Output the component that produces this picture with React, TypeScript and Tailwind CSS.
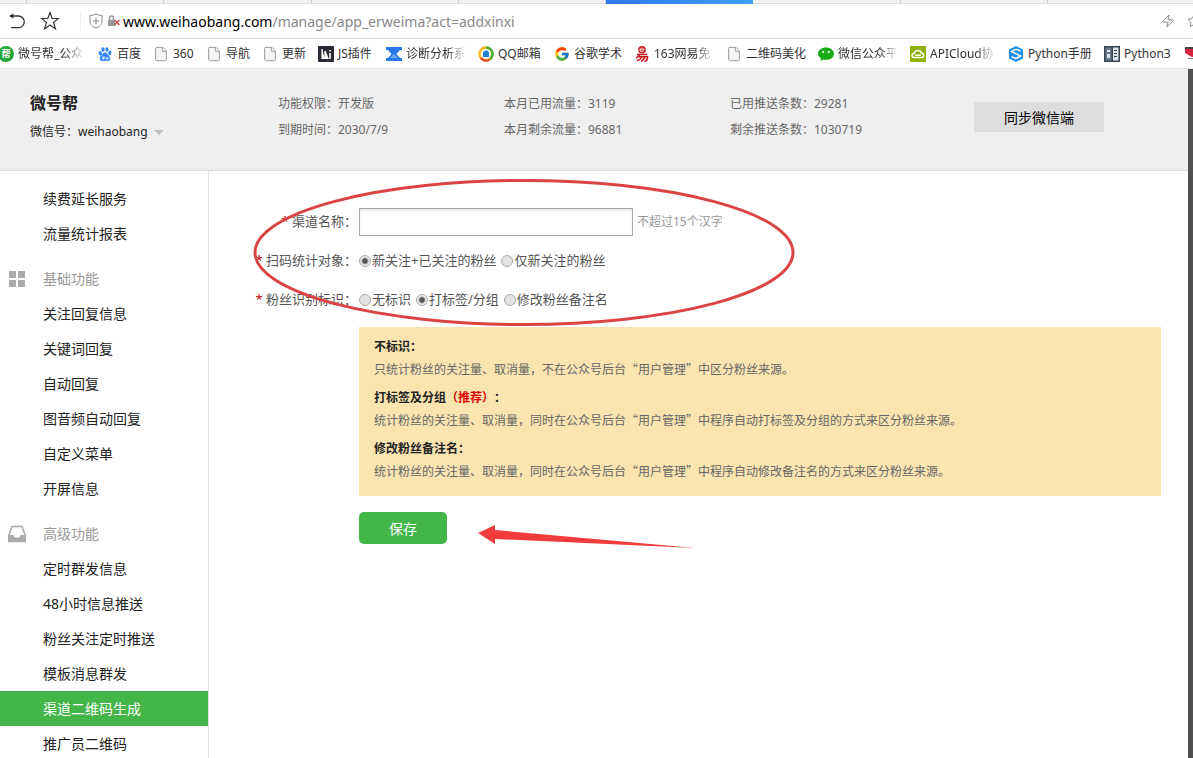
import type { ReactNode } from "react";
import { File, Star, Zap } from "lucide-react";
import { FcGoogle } from "react-icons/fc";

const PageIcon = () => <File className="size-4 fill-[#f6f6f6] text-[#999999]" strokeWidth={1.5} />;

const BangIcon = () => (
    <span className="flex size-4 items-center justify-center rounded-full bg-[#22a83a] text-[9px] leading-none font-bold text-white">帮</span>
);

const BaiduIcon = () => (
    <svg viewBox="0 0 16 16" className="size-4" fill="#3385ff">
        <ellipse cx="3.300" cy="7.300" rx="1.700" ry="2.200" transform="rotate(-15 3.300 7.300)" />
        <ellipse cx="6" cy="3.500" rx="1.600" ry="2.300" />
        <ellipse cx="10" cy="3.500" rx="1.600" ry="2.300" />
        <ellipse cx="12.800" cy="7" rx="1.600" ry="2.200" transform="rotate(15 12.800 7)" />
        <path d="M8 6.500c2 0 2.500 2.200 3.800 3.200 2.200 1.700 2 5-.8 5.300-1.200.1-2-.3-3-.3s-1.800.4-3 .3c-2.800-.3-3-3.600-.8-5.300C5.500 8.700 6 6.500 8 6.500z" />
        <path d="M7 10v3H5.500v-1.500H7M9 11v2h2v-2" fill="none" stroke="#fff" strokeWidth="0.800" />
    </svg>
);

const JsIcon = () => (
    <svg viewBox="0 0 16 16" className="size-4">
        <rect width="16" height="16" rx="1" fill="#2b2b35" />
        <path d="M4 3v9.500h3M7 5l3 7.500H7z" fill="#fff" stroke="#fff" strokeWidth="1.200" />
        <path d="M12 7v6M12 4v1.500" fill="none" stroke="#fff" strokeWidth="1.600" />
    </svg>
);

const DiagnoseIcon = () => (
    <svg viewBox="0 0 16 16" className="size-4">
        <path d="M0 1h16v3h-2l-3.500 4 3.500 4h2v3H0v-3h2l3.500-4L2 4H0z" fill="#2878e8" />
        <path d="M4 12l4-4 4 4z" fill="#6cabff" />
    </svg>
);

const MailIcon = () => (
    <svg viewBox="0 0 16 16" className="size-4">
        <circle cx="8" cy="8" r="6.500" fill="#fff" stroke="#f5b81c" strokeWidth="2.400" />
        <path d="M8 1.500A6.500 6.500 0 0 1 14.500 8c0 2-1 4-2.500 5" fill="none" stroke="#4cae3c" strokeWidth="2.600" />
        <path d="M3 12.200A6.500 6.500 0 0 0 11.500 13.500" fill="none" stroke="#e64b2c" strokeWidth="2.600" />
        <path d="M8 4.500a3 3 0 0 1 3 3V11H5V7.500a3 3 0 0 1 3-3z" fill="#1f7fd0" />
    </svg>
);

const NetEaseIcon = () => (
    <svg viewBox="0 0 16 16" className="size-4" fill="none" stroke="#c9151e" strokeWidth="1.600">
        <circle cx="8" cy="3.800" r="3.800" fill="#c9151e" stroke="none" />
        <path d="M6 4h4c0-2.500-4-2.500-4 0s2.500 2.200 3.500 1.300" stroke="#fff" strokeWidth="0.900" />
        <path d="M3 8.500h10M6 8.500c-1 2-2 2.500-4 3.500M4.500 10.800h9c0 3-.5 4.500-3 4.500M8 11c-1 2-2.500 3-5 3.800M11 11c-1 2.500-2 3.500-4 4.500" />
    </svg>
);

const WechatIcon = () => (
    <svg viewBox="0 0 16 16" className="size-4">
        <path d="M8 1.500c4.400 0 8 2.700 8 6.200s-3.600 6.200-8 6.200c-.9 0-1.700-.1-2.500-.3L2.500 15l.6-2.700C1.200 11.200 0 9.500 0 7.700 0 4.200 3.600 1.500 8 1.500z" fill="#1aad19" />
        <circle cx="5.200" cy="6" r="1.100" fill="#fff" />
        <circle cx="10.800" cy="6" r="1.100" fill="#fff" />
    </svg>
);

const ApiIcon = () => (
    <svg viewBox="0 0 16 16" className="size-4">
        <rect width="16" height="16" fill="#8fb400" />
        <path d="M4 11.500a2 2 0 0 1 0-4c.5-2 2-3 4-3s3 1 3.400 2.500c3 0 3 4.500.6 4.500zM5 9.200h6" fill="none" stroke="#fff" strokeWidth="1.500" />
    </svg>
);

const PythonIcon = () => (
    <svg viewBox="0 0 16 16" className="size-4">
        <path d="M8 0l7 3.500v9L8 16l-7-3.500v-9z" fill="#1e90e8" />
        <path d="M12.500 5L8 3.200 3.500 5.500l9 4.500L8 12.600 3.500 10.800" fill="none" stroke="#fff" strokeWidth="1.500" />
    </svg>
);

const BookIcon = () => (
    <svg viewBox="0 0 16 16" className="size-4">
        <rect width="16" height="16" fill="#364452" />
        <path d="M1.500 1.500h6v13h-6z" fill="#6b7c8b" />
        <path d="M9 1.500h5.500v13H9z" fill="#dce3e8" />
        <path d="M3 4h3v2H3zM3 8h3v4H3z" fill="#dce3e8" />
        <path d="M10 4h3v1h-3zM10 7h3v1h-3zM10 10h3v1h-3z" fill="#364452" />
    </svg>
);

const RedIcon = () => (
    <svg viewBox="0 0 16 16" className="size-4">
        <path d="M1 1h15v2H1z" fill="#444" />
        <path d="M1 3h15v8H8L1 7z" fill="#d5233b" />
        <path d="M4 12h12v1H4z" fill="#777" />
    </svg>
);

const bookmarks: { label: string; width: string; icon: ReactNode; fade?: boolean }[] = [
    { label: "微号帮_公众", width: "w-[67px]", icon: <BangIcon />, fade: true },
    { label: "百度", width: "w-6", icon: <BaiduIcon /> },
    { label: "360", width: "w-[21px]", icon: <PageIcon /> },
    { label: "导航", width: "w-6", icon: <PageIcon /> },
    { label: "更新", width: "w-6", icon: <PageIcon /> },
    { label: "JS插件", width: "w-9", icon: <JsIcon /> },
    { label: "诊断分析系", width: "w-[60px]", icon: <DiagnoseIcon />, fade: true },
    { label: "QQ邮箱", width: "w-11", icon: <MailIcon /> },
    { label: "谷歌学术", width: "w-12", icon: <FcGoogle className="size-4" /> },
    { label: "163网易免", width: "w-[60px]", icon: <NetEaseIcon />, fade: true },
    { label: "二维码美化", width: "w-[60px]", icon: <PageIcon /> },
    { label: "微信公众平", width: "w-[60px]", icon: <WechatIcon />, fade: true },
    { label: "APICloud协", width: "w-[66px]", icon: <ApiIcon />, fade: true },
    { label: "Python手册", width: "w-16", icon: <PythonIcon /> },
    { label: "Python3", width: "w-12", icon: <BookIcon /> },
    { label: "", width: "w-0", icon: <RedIcon /> },
];

const tabs = ["w-[27px]", "w-[137px]", "w-[148px]", "w-[147px]", "w-[147px]"];

const stats = [
    ["功能权限：开发版", "到期时间：2030/7/9"],
    ["本月已用流量：3119", "本月剩余流量：96881"],
    ["已用推送条数：29281", "剩余推送条数：1030719"],
];

const GridIcon = () => (
    <svg viewBox="0 0 18 18" className="size-[18px]">
        <path d="M1 1h7v7H1zM10 1h7v7h-7zM1 10h7v7H1zM10 10h7v7h-7z" fill="#aaaaaa" />
    </svg>
);

const TrayIcon = () => (
    <svg viewBox="0 0 18 18" className="size-[18px]">
        <path d="M4 1.500h10l3 8.500v6.500H1V10z" fill="none" stroke="#aaaaaa" strokeWidth="1.500" />
        <path d="M0 10h5.500c.5 1 .9 2.500 1.500 2.500h4c.6 0 1-1.500 1.500-2.500H18v7H0z" fill="#aaaaaa" />
    </svg>
);

const menu: { title?: string; icon?: ReactNode; items: string[] }[] = [
    { items: ["续费延长服务", "流量统计报表"] },
    {
        title: "基础功能",
        icon: <GridIcon />,
        items: ["关注回复信息", "关键词回复", "自动回复", "图音频自动回复", "自定义菜单", "开屏信息"],
    },
    {
        title: "高级功能",
        icon: <TrayIcon />,
        items: ["定时群发信息", "48小时信息推送", "粉丝关注定时推送", "模板消息群发", "渠道二维码生成", "推广员二维码"],
    },
];

const activeItem = "渠道二维码生成";

function BrowserBar() {
    return (
        <div className="shrink-0 bg-white">
            {/* Tab strip */}
            <div className="flex h-1 border-b border-[#dddddd] bg-[#f0f0f0]">
                {tabs.map((w, i) => (
                    <span key={i} className={`${w} shrink-0 border-r border-[#cccccc]`}></span>
                ))}
                <span className="h-1 w-[147px] shrink-0 bg-gradient-to-r from-[#2f78ee] to-[#41a0f5]"></span>
                <span className="w-[148px] shrink-0 border-r border-[#cccccc]"></span>
                <span className="w-[147px] shrink-0 border-r border-[#cccccc]"></span>
            </div>

            {/* Address row */}
            <div className="flex h-[34px] items-center pl-2">
                <button aria-label="后退">
                    <svg viewBox="0 0 18 18" className="size-[18px]" fill="none" stroke="#333333" strokeWidth="1.300">
                        <path d="M2 4h8.500a5.800 5.800 0 0 1 0 11.600H3" />
                        <path d="M1 4l4.500-2.500v5z" fill="#333333" stroke="none" />
                    </svg>
                </button>
                <button aria-label="收藏" className="ml-3.5">
                    <svg viewBox="0 0 20 20" className="size-5" fill="none" stroke="#333333" strokeWidth="1.200">
                        <path d="M10 1.500l2.200 6h6.300l-5 3.900 1.900 6.300L10 14l-5.400 3.700 1.900-6.300-5-3.900h6.300z" />
                    </svg>
                </button>
                <span className="ml-5 h-5 w-px bg-[#eeeeee]"></span>
                <svg viewBox="0 0 14 16" className="ml-2 h-4 w-3.5" fill="none" stroke="#888888">
                    <path d="M7 1c2 1 4 1.500 6 1.500V8c0 3.500-2.500 5.500-6 7-3.500-1.500-6-3.500-6-7V2.500C3 2.500 5 2 7 1zM7 5v6M4 8h6" />
                </svg>
                <svg viewBox="0 0 14 14" className="mr-0.5 ml-1 size-3.5">
                    <path d="M2.500 6V4a2 2 0 0 1 4 0v2" fill="none" stroke="#999999" strokeWidth="1.500" />
                    <path d="M1 6h7v6H1z" fill="#999999" />
                    <path d="M7.500 6l5 5M12.500 6l-5 5" stroke="#d04040" strokeWidth="1.200" />
                </svg>
                <span className="flex-1 text-[14px] text-[#888888]">
                    <span className="text-black">www.weihaobang.com</span>/manage/app_erweima?act=addxinxi
                </span>
                <Zap className="size-3.5 shrink-0 text-[#777777]" strokeWidth={1.5} />
                <span className="ml-3 w-1.5 overflow-hidden"><Star className="size-3.5 text-[#777777]" strokeWidth={1.5} /></span>
            </div>

            {/* Bookmarks */}
            <nav className="-ml-0.5 flex h-[31px] items-center gap-3 overflow-hidden border-y border-[#e2e2e2] text-[12px] text-[#333333]">
                {bookmarks.map((b, i) => (
                    <a key={i} href="#" aria-label={b.label || "书签"} className="flex shrink-0 items-center gap-1">
                        {b.icon}
                        <span className={`${b.width} whitespace-nowrap ${b.fade ? "overflow-hidden [mask-image:linear-gradient(to_right,black_70%,transparent)]" : ""}`}>
                            {b.label}
                        </span>
                    </a>
                ))}
            </nav>
        </div>
    );
}

function Header() {
    return (
        <header className="flex h-[102px] shrink-0 border-b border-[#dddddd] bg-[#efefef] pl-[30px]">
            <div className="w-[248px] shrink-0 pt-[22px]">
                <h1 className="text-[16px] leading-6 font-bold text-[#222222]">微号帮</h1>
                <button className="mt-[7px] flex h-5 items-center text-[12px] text-[#222222]">
                    微信号：weihaobang
                    <span className="ml-1.5 border-x-5 border-t-5 border-x-transparent border-t-[#c0c0c0]"></span>
                </button>
            </div>
            {stats.map((col) => (
                <div key={col[0]} className="w-[226px] shrink-0 pt-[22px] text-[12px] leading-[26px] text-[#666666]">
                    <p>{col[0]}</p>
                    <p>{col[1]}</p>
                </div>
            ))}
            <button className="mt-[33px] ml-[18px] h-[30px] w-[130px] shrink-0 bg-[#dddddd] text-[14px] text-black">同步微信端</button>
        </header>
    );
}

function Sidebar() {
    return (
        <aside className="w-[209px] shrink-0 border-r border-[#e2e2e2] text-[14px] leading-[35px]">
            {menu.map((group, i) => (
                <div key={i} className="pt-2.5">
                    {group.title && (
                        <h2 className="flex items-center pl-2 text-[#999999]">
                            {group.icon}
                            <span className="pl-[17px]">{group.title}</span>
                        </h2>
                    )}
                    {group.items.map((item) => (
                        <a
                            key={item}
                            href="#"
                            className={`block pl-[43px] ${item === activeItem ? "bg-[#44b549] text-white" : "text-[#222222]"}`}
                        >
                            {item}
                        </a>
                    ))}
                </div>
            ))}
        </aside>
    );
}

function Radio({ name, label, checked }: { name: string; label: string; checked?: boolean }) {
    return (
        <label className="mr-[5px] flex items-center gap-px">
            <input
                type="radio"
                name={name}
                defaultChecked={checked}
                className="size-3 appearance-none rounded-full border border-[#a8a8a8] bg-[#e2e2e2] checked:bg-[radial-gradient(circle,#555555_0_2px,#eeeeee_4px)]"
            />
            {label}
        </label>
    );
}

function FieldLabel({ text, htmlFor }: { text: string; htmlFor?: string }) {
    const Tag = htmlFor ? "label" : "span";
    return (
        <Tag htmlFor={htmlFor} className="w-[150px] shrink-0 pr-0.5 text-right">
            <span className="text-[#cc0000]">*</span> {text}
        </Tag>
    );
}

function ChannelForm() {
    return (
        <form className="pt-[31px] pr-[27px] text-[13px] text-[#555555]" onSubmit={(e) => e.preventDefault()}>
            <div className="flex h-[39px] items-center">
                <FieldLabel text="渠道名称：" htmlFor="channel" />
                <input id="channel" className="h-7 w-[274px] border border-[#a9a9a9] bg-white px-2 shadow-[inset_0_2px_2px_#e8e8e8] outline-none" />
                <span className="ml-1 text-[12px] text-[#999999]">不超过15个汉字</span>
            </div>
            <div className="flex h-[39px] items-center" role="radiogroup" aria-label="扫码统计对象">
                <FieldLabel text="扫码统计对象：" />
                <Radio name="target" label="新关注+已关注的粉丝" checked />
                <Radio name="target" label="仅新关注的粉丝" />
            </div>
            <div className="flex h-[39px] items-center" role="radiogroup" aria-label="粉丝识别标识">
                <FieldLabel text="粉丝识别标识：" />
                <Radio name="mark" label="无标识" />
                <Radio name="mark" label="打标签/分组" checked />
                <Radio name="mark" label="修改粉丝备注名" />
            </div>

            {/* Notes */}
            <dl className="mt-2 ml-[150px] bg-[#fae4b0] px-[15px] pt-[7px] pb-3.5 font-['Noto_Sans_CJK_SC',sans-serif] text-[12px] leading-[23px] text-[#666666] [text-spacing-trim:space-all]">
                <dt className="font-bold text-[#222222]">不标识：</dt>
                <dd>只统计粉丝的关注量、取消量，不在公众号后台“用户管理”中区分粉丝来源。</dd>
                <dt className="mt-[5px] font-bold text-[#222222]">
                    打标签及分组<span className="text-[#dd0000]">（推荐）</span>：
                </dt>
                <dd>统计粉丝的关注量、取消量，同时在公众号后台“用户管理”中程序自动打标签及分组的方式来区分粉丝来源。</dd>
                <dt className="mt-[5px] font-bold text-[#222222]">修改粉丝备注名：</dt>
                <dd>统计粉丝的关注量、取消量，同时在公众号后台“用户管理”中程序自动修改备注名的方式来区分粉丝来源。</dd>
            </dl>
            <button type="submit" className="mt-4 ml-[150px] h-8 w-[88px] rounded-[5px] bg-[#44b549] text-[14px] text-white">保存</button>
        </form>
    );
}

// Hand-drawn style marks laid over the form
function Marks() {
    return (
        <svg viewBox="0 0 600 400" className="pointer-events-none absolute top-0 left-0 h-[400px] w-[600px]">
            <ellipse cx="315" cy="81.500" rx="269" ry="72" fill="none" stroke="#dc4444" strokeWidth="3" />
            <path d="M269 362l17-8v5l200 18-200-9v5z" fill="#f03c3c" />
        </svg>
    );
}

export default function App() {
    return (
        <div className="flex h-screen flex-col overflow-hidden bg-white font-['Noto_Sans','Noto_Sans_CJK_SC',sans-serif]">
            <BrowserBar />
            <div className="flex min-h-0 flex-1">
                <div className="flex min-w-0 flex-1 flex-col">
                    <Header />
                    <div className="flex min-h-0 flex-1">
                        <Sidebar />
                        <main className="relative min-w-0 flex-1">
                            <ChannelForm />
                            <Marks />
                        </main>
                    </div>
                </div>
                <div className="w-[5px] shrink-0 bg-[#505050]"></div>
            </div>
        </div>
    );
}
